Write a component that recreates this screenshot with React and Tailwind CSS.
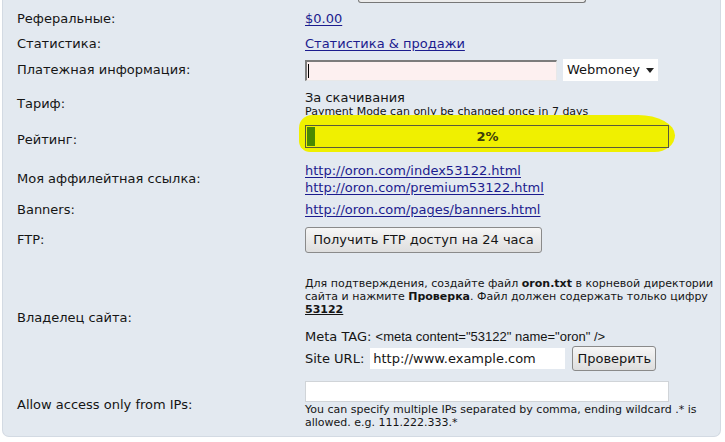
import React from 'react'

const verdana = { fontFamily: '"DejaVu Sans", Verdana, sans-serif' }

function Row({ label, h, children, valueClass = 'self-center' }) {
    return (
        <div className="grid grid-cols-[288px_1fr]" style={{ height: h }}>
            <div className="self-center">{label}</div>
            <div className={valueClass}>{children}</div>
        </div>
    )
}

function Link({ children }) {
    return <a href="#" className="text-[#1c1c8e] underline underline-offset-2">{children}</a>
}

export default function App() {
    return (
        <div className="w-[725px] h-[442px] bg-white overflow-hidden" style={verdana}>
            <div className="ml-[2px] w-[719px] h-[437px] bg-[#e3e9f0] border-x border-b border-[#d3dae3] rounded-b-[7px] pl-[14px] text-[13px] text-[#151515] leading-[16px]">
                {/* bottom of a button from the block above */}
                <div className="h-[3px] pl-[341px]">
                    <div className="w-[228px] h-[3px] border-x border-b border-[#777] rounded-b-[3px] bg-[#ececec]"></div>
                </div>

                <Row label="Реферальные:" h={32}>
                    <Link>$0.00</Link>
                </Row>
                <Row label="Статистика:" h={18}>
                    <Link>Статистика &amp; продажи</Link>
                </Row>
                <Row label="Платежная информация:" h={34}>
                    <div className="flex items-center gap-[6px]">
                        <div className="w-[252px] h-[21px] bg-[#fdf0f0] border-t-2 border-l-2 border-t-[#7c7c7c] border-l-[#7c7c7c] border-b border-r border-b-[#e8e8e8] border-r-[#e8e8e8] flex items-center pl-[1px]">
                            <span className="w-[1px] h-[14px] bg-black"></span>
                        </div>
                        <div className="w-[95px] h-[22px] bg-white flex items-center pl-[4px] gap-[6px]">
                            <span>Webmoney</span>
                            <svg width="8" height="5" viewBox="0 0 8 5"><path d="M0 0h8L4 5z" fill="#222" /></svg>
                        </div>
                    </div>
                </Row>
                <Row label="Тариф:" h={34} valueClass="self-start pt-[3px]">
                    <div className="flex flex-col">
                        <span className="leading-[15px]">За скачивания</span>
                        <span className="text-[11px] leading-[13px]">Payment Mode can only be changed once in 7 days</span>
                    </div>
                </Row>
                <Row label="Рейтинг:" h={38} valueClass="self-start pt-[4px]">
                    <div className="relative w-[364px] h-[23px]">
                        <div className="absolute -left-[6px] -top-[10px] w-[376px] h-[37px] bg-[#f0f000] rounded-[14px_40px_22px_12px/14px_22px_18px_12px]"></div>
                        <div className="relative h-full border border-[#5a5a3a] bg-[#f0f000] flex items-center">
                            <div className="w-[8px] h-[19px] ml-[1px] bg-[#4b8a00]"></div>
                            <div className="flex-1 text-center font-bold text-[#3d3d0a] pr-[8px]">2%</div>
                        </div>
                    </div>
                </Row>
                <Row label="Моя аффилейтная ссылка:" h={40}>
                    <div className="flex flex-col leading-[17px]">
                        <Link>http://oron.com/index53122.html</Link>
                        <Link>http://oron.com/premium53122.html</Link>
                    </div>
                </Row>
                <Row label="Banners:" h={22}>
                    <Link>http://oron.com/pages/banners.html</Link>
                </Row>
                <Row label="FTP:" h={38}>
                    <button className="w-[237px] h-[26px] border border-[#8a8a8a] rounded-[3px] bg-gradient-to-b from-[#f6f6f6] to-[#dedede] text-[13px] text-[#151515]">
                        Получить FTP доступ на 24 часа
                    </button>
                </Row>
                <Row label="Владелец сайта:" h={118} valueClass="self-start pt-[18px]">
                    <div className="text-[11px] leading-[13px] whitespace-nowrap">
                        Для подтверждения, создайте файл <b>oron.txt</b> в корневой директории<br />
                        сайта и нажмите <b>Проверка</b>. Файл должен содержать только цифру<br />
                        <b className="underline">53122</b>
                    </div>
                    <div className="mt-[14px] h-[14px] leading-[14px]">
                        Meta TAG: <span style={{ fontFamily: '"Liberation Sans", Arial, sans-serif' }}>&lt;meta content="53122" name="oron" /&gt;</span>
                    </div>
                    <div className="flex items-center mt-[2px] h-[25px]">
                        <span className="mr-[6px]">Site URL:</span>
                        <div className="w-[195px] h-[21px] bg-white flex items-center pl-[3px]">http://www.example.com</div>
                        <button className="ml-[7px] w-[84px] h-[25px] border border-[#8a8a8a] rounded-[3px] bg-gradient-to-b from-[#f6f6f6] to-[#dedede] text-[13px] text-[#151515]">
                            Проверить
                        </button>
                    </div>
                </Row>
                <Row label="Allow access only from IPs:" h={56}>
                    <div className="w-[364px] h-[21px] bg-white border border-[#d0d4d8]"></div>
                    <div className="text-[11px] leading-[13px] mt-[1px] whitespace-nowrap">
                        You can specify multiple IPs separated by comma, ending wildcard .* is<br />
                        allowed. e.g. 111.222.333.*
                    </div>
                </Row>
            </div>
        </div>
    )
}
